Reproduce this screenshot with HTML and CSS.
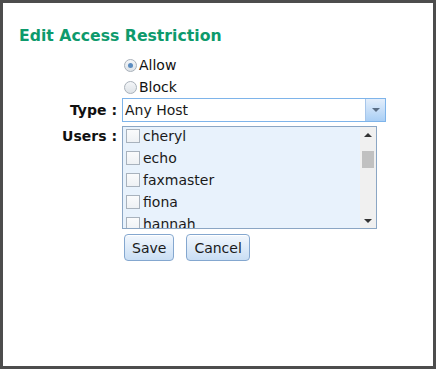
FILE: index.html
```html
<!DOCTYPE html>
<html lang="en">
<head>
    <meta charset="UTF-8">
    <title>Edit Access Restriction</title>
    <link rel="stylesheet" href="styles.css">
</head>
<body>
    <div class="dialog">
        <h2>Edit Access Restriction</h2>

        <form class="access-form">
            <div class="label"></div>
            <div class="radios">
                <label class="radio"><span class="radio-dot checked"></span>Allow</label>
                <label class="radio"><span class="radio-dot"></span>Block</label>
            </div>

            <div class="label type-label">Type :</div>
            <div class="select">
                <span class="select-value">Any Host</span>
                <span class="select-btn"><span class="arrow-down small"></span></span>
            </div>

            <div class="label users-label">Users :</div>
            <div class="userlist">
                <div class="items">
                    <div class="item"><span class="check"></span>cheryl</div>
                    <div class="item"><span class="check"></span>echo</div>
                    <div class="item"><span class="check"></span>faxmaster</div>
                    <div class="item"><span class="check"></span>fiona</div>
                    <div class="item"><span class="check"></span>hannah</div>
                </div>
                <div class="scrollbar">
                    <span class="arrow-up"></span>
                    <span class="thumb"></span>
                    <span class="arrow-down"></span>
                </div>
            </div>

            <div class="label"></div>
            <div class="buttons">
                <button type="button" class="btn">Save</button>
                <button type="button" class="btn">Cancel</button>
            </div>
        </form>
    </div>
</body>
</html>
```

FILE: styles.css
```css
html, body {
    margin: 0;
    padding: 0;
    background: #fff;
}
body {
    font-family: "DejaVu Sans", Verdana, sans-serif;
    font-size: 13px;
    color: #1a1a1a;
}
.dialog {
    width: 436px;
    height: 369px;
    box-sizing: border-box;
    border: 3px solid #4d4d4d;
    padding: 23px 16px 0 16px;
}
h2 {
    margin: 0 0 8px 0;
    font-size: 15.7px;
    line-height: 20px;
    color: #0d9a6c;
    font-weight: bold;
}
.access-form {
    display: grid;
    grid-template-columns: 98px 1fr;
    column-gap: 5px;
}
.label {
    text-align: right;
    font-weight: bold;
    font-size: 14px;
    color: #111;
}
.type-label {
    line-height: 24px;
}
.users-label {
    padding-top: 1px;
    line-height: 18px;
}
.radios {
    display: flex;
    flex-direction: column;
    padding-left: 2px;
}
.radio {
    display: flex;
    align-items: center;
    height: 22px;
    font-size: 14px;
    color: #111;
}
.radio-dot {
    width: 11px;
    height: 11px;
    border: 1px solid #a9b1ba;
    border-radius: 50%;
    background: linear-gradient(#f4f6f8, #dde2e7);
    margin-right: 2px;
    position: relative;
}
.radio-dot.checked::after {
    content: "";
    position: absolute;
    left: 3px;
    top: 3px;
    width: 5px;
    height: 5px;
    border-radius: 50%;
    background: #5b8cc0;
}
.select {
    width: 264px;
    height: 24px;
    box-sizing: border-box;
    border: 1px solid #7eb4ea;
    display: flex;
    align-items: stretch;
    margin-top: 0;
    margin-bottom: 4px;
}
.select-value {
    flex: 1;
    padding-left: 2px;
    line-height: 22px;
    font-size: 14px;
}
.select-btn {
    width: 19px;
    border-left: 1px solid #a7c6ea;
    background: linear-gradient(#e3eefb, #aacff5);
    display: flex;
    align-items: center;
    justify-content: center;
}
.userlist {
    width: 255px;
    height: 103px;
    box-sizing: border-box;
    border: 1px solid #8ba6c4;
    background: #e8f2fc;
    display: flex;
    overflow: hidden;
}
.items {
    flex: 1;
    margin-top: -2px;
}
.item {
    display: flex;
    align-items: center;
    height: 22px;
    font-size: 14px;
    padding-left: 3px;
}
.check {
    width: 12px;
    height: 12px;
    border: 1px solid #a8b2bd;
    background: linear-gradient(#fafbfc, #eef1f4);
    margin-right: 3px;
}
.scrollbar {
    width: 16px;
    background: #f0f0f0;
    display: flex;
    flex-direction: column;
    align-items: center;
    padding: 6px 0 5px 0;
    box-sizing: border-box;
}
.arrow-up {
    width: 0;
    height: 0;
    border-left: 4px solid transparent;
    border-right: 4px solid transparent;
    border-bottom: 4px solid #333;
}
.arrow-down {
    width: 0;
    height: 0;
    border-left: 4px solid transparent;
    border-right: 4px solid transparent;
    border-top: 4px solid #333;
    margin-top: auto;
}
.arrow-down.small {
    border-top: 4px solid #5a6e85;
    margin-top: 0;
}
.thumb {
    width: 12px;
    height: 17px;
    background: #c1c1c1;
    margin-top: 14px;
}
.buttons {
    display: flex;
    gap: 12px;
    margin-top: 5px;
    padding-left: 2px;
}
.btn {
    font-family: "DejaVu Sans", Verdana, sans-serif;
    font-size: 14px;
    color: #1a1a1a;
    height: 27px;
    padding: 0 7px;
    border: 1px solid #84a7cf;
    border-radius: 4px;
    background: linear-gradient(#f2f7fd, #c9def4);
    box-shadow: inset 0 1px 0 #fff;
}
```
